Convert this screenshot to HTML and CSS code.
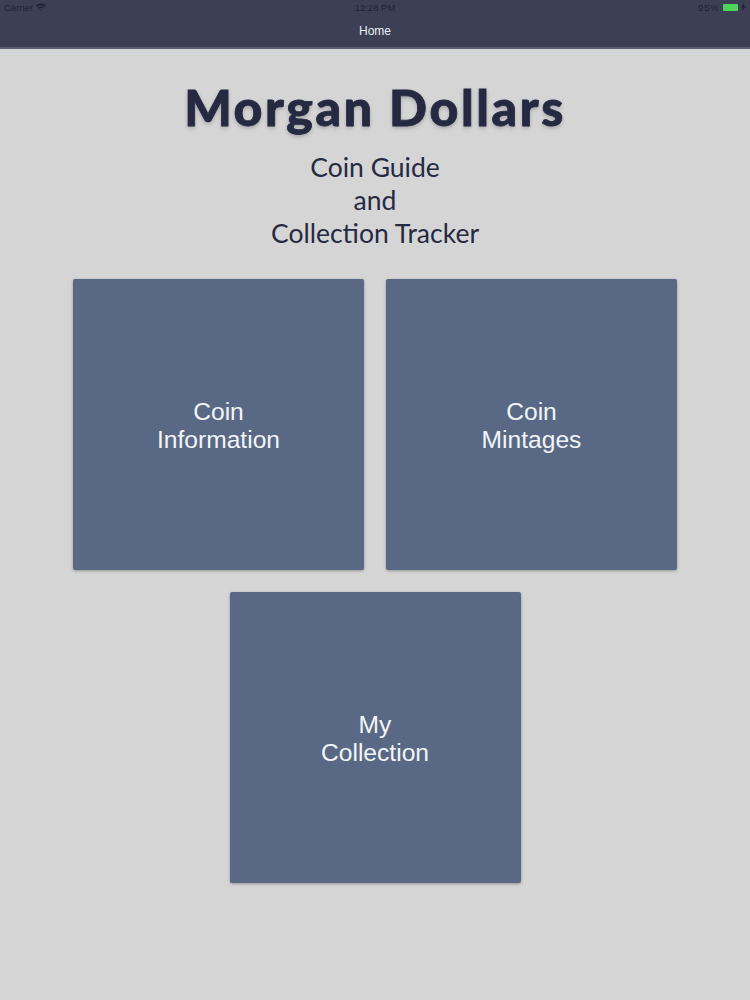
FILE: index.html
```html
<!DOCTYPE html>
<html lang="en">
<head>
  <meta charset="UTF-8" />
  <meta name="viewport" content="width=device-width, initial-scale=1.0"/>
  <title>Morgan Dollars</title>
  <link rel="stylesheet" href="styles.css">
</head>
<body>

  <!-- Status bar + nav -->
  <div class="top-bar">
    <div class="status-bar">
      <div class="status-left">
        <span>Carrier</span>
        <svg class="wifi" width="10" height="8" viewBox="0 0 10 8">
          <path d="M0 2.6 A7 7 0 0 1 10 2.6 L8.8 3.8 A5.3 5.3 0 0 0 1.2 3.8 Z M2.1 4.7 A4 4 0 0 1 7.9 4.7 L6.8 5.8 A2.5 2.5 0 0 0 3.2 5.8 Z M4 6.7 A1.4 1.4 0 0 1 6 6.7 L5 7.8 Z"/>
        </svg>
      </div>
      <div class="status-time">12:28 PM</div>
      <div class="status-right">
        <span class="percent">95%</span>
        <span class="battery"></span>
        <svg class="bolt" width="5" height="8" viewBox="0 0 5 8">
          <path d="M3 0 L0 4.6 H2 L1.6 8 L5 3.2 H2.8 Z"/>
        </svg>
      </div>
    </div>
    <div class="nav-title">Home</div>
  </div>

  <!-- Heading -->
  <div class="heading">
    <h1>Morgan Dollars</h1>
    <p>Coin Guide<br>and<br>Collection Tracker</p>
  </div>

  <!-- Menu tiles -->
  <div class="tiles">
    <div class="tile">Coin<br>Information</div>
    <div class="tile">Coin<br>Mintages</div>
    <div class="tile">My<br>Collection</div>
  </div>

</body>
</html>
```

FILE: styles.css
```css
* {
  margin: 0;
  padding: 0;
  box-sizing: border-box;
}

body {
  background: #d5d5d6;
  font-family: "Liberation Sans", Arial, sans-serif;
  height: 1000px;
  overflow: hidden;
}

.top-bar {
  height: 49px;
  background: #3d4054;
  border-bottom: 2px solid #5a5e72;
}

.status-bar {
  height: 14px;
  padding: 0 4px;
  display: flex;
  justify-content: space-between;
  align-items: center;
  position: relative;
  font-size: 9.5px;
  color: #1f2233;
}

.status-left, .status-right {
  display: flex;
  align-items: center;
  gap: 3px;
}

.status-time {
  position: absolute;
  left: 0;
  right: 0;
  text-align: center;
}

.wifi, .bolt {
  fill: #1f2233;
}

.percent {
  letter-spacing: 1px;
}

.battery {
  width: 15px;
  height: 7px;
  background: #4cd55a;
  border-radius: 1px;
}

.status-right {
  gap: 3px;
}

.nav-title {
  margin-top: 10px;
  text-align: center;
  font-size: 12px;
  line-height: 14px;
  color: #eceef2;
}

.heading {
  text-align: center;
  color: #252a42;
  font-family: Lato, sans-serif;
}

.heading h1 {
  margin-top: 30px;
  font-size: 50px;
  line-height: 56px;
  font-weight: 900;
  letter-spacing: 2.6px;
  -webkit-text-stroke: 0.8px #252a42;
  text-shadow: 0 2px 4px rgba(0, 0, 0, 0.25);
}

.heading p {
  margin-top: 16px;
  font-size: 26.5px;
  line-height: 33px;
  font-weight: 400;
}

.tiles {
  margin-top: 28.5px;
  display: flex;
  flex-wrap: wrap;
  justify-content: center;
  gap: 22px;
}

.tile {
  width: 291px;
  height: 291px;
  padding-top: 3px;
  background: #596885;
  border-radius: 2px;
  box-shadow: 0 1px 3px rgba(0, 0, 0, 0.3);
  display: flex;
  align-items: center;
  justify-content: center;
  text-align: center;
  color: #f2f5f9;
  font-size: 24.6px;
  line-height: 28px;
}
```
